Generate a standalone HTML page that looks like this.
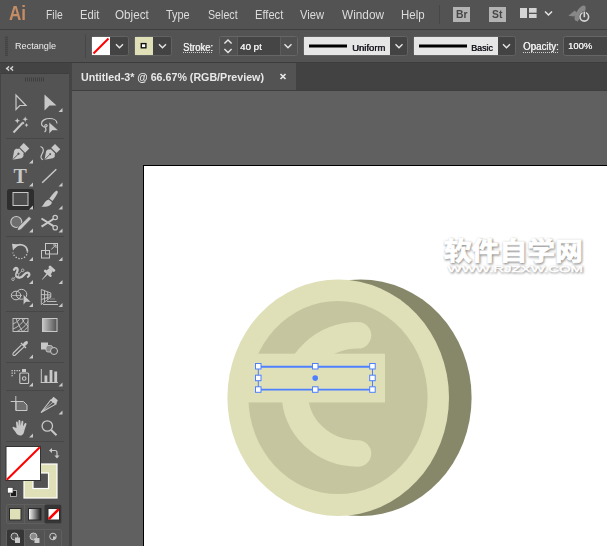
<!DOCTYPE html>
<html><head><meta charset="utf-8">
<style>
html,body{margin:0;padding:0;}
body{width:607px;height:546px;overflow:hidden;background:#606060;position:relative;font-family:"Liberation Sans","Noto Sans CJK SC",sans-serif;font-size:12px;color:#d8d8d8;}
.abs{position:absolute;}
#menubar{left:0;top:0;width:607px;height:29px;background:#535353;}
#menuline{left:0;top:29px;width:607px;height:1px;background:#3e3e3e;}
#ctrl{left:0;top:30px;width:607px;height:32px;background:#535353;}
#tabbar{left:0;top:62px;width:607px;height:28px;background:#424242;}
#tabline{left:72px;top:90px;width:535px;height:1px;background:#3e3e3e;}
#ctrlline{left:0;top:62px;width:607px;height:1px;background:#3c3c3c;}
#tab{left:72px;top:63px;width:224px;height:27px;background:#535353;}
#tools{left:0;top:62px;width:69px;height:484px;background:#535353;}
#toolhead{left:0;top:63px;width:69px;height:11px;background:#434343;border-bottom:1px solid #3e3e3e;box-sizing:border-box;}
#toolleft{left:0;top:63px;width:1px;height:483px;background:#454545;}
#gap{left:69px;top:62px;width:3px;height:484px;background:#444;}
.m{display:inline-block;transform-origin:0 0;position:absolute;top:7px;font-size:13px;color:#dcdcdc;white-space:nowrap;}
.c{display:inline-block;transform-origin:0 0;position:absolute;font-size:10px;color:#ededed;white-space:nowrap;}
#art{left:143px;top:165px;width:464px;height:381px;background:#fff;border-left:1px solid #000;border-top:1px solid #000;}
</style></head><body>
<div class="abs" id="menubar"></div>
<div class="abs" id="menuline"></div>
<div class="abs" id="ctrl"></div>
<div class="abs" id="tabbar"></div>
<div class="abs" id="tab"></div>
<div class="abs" id="tabline"></div>
<div class="abs" id="tools"></div>
<div class="abs" id="toolhead"></div>
<div class="abs" id="gap"></div>
<div class="abs" id="toolleft"></div>
<div class="abs" id="ctrlline"></div>
<div class="abs" id="art"></div>

<!-- tools -->
<svg class="abs" style="left:0;top:0" width="72" height="546">
  <defs>
    <linearGradient id="gr1" x1="0" x2="1" y1="0" y2="0"><stop offset="0" stop-color="#c8c8c8"/><stop offset="1" stop-color="#505050"/></linearGradient>
    <linearGradient id="gr2" x1="0" x2="1" y1="0" y2="0"><stop offset="0" stop-color="#ffffff"/><stop offset="1" stop-color="#1a1a1a"/></linearGradient>
  </defs>
  <!-- separators -->
  <g fill="#474747">
    <rect x="6" y="138" width="58" height="1"/><rect x="6" y="236" width="58" height="1"/><rect x="6" y="311" width="58" height="1"/><rect x="6" y="362" width="58" height="1"/><rect x="6" y="390" width="58" height="1"/><rect x="6" y="441" width="58" height="1"/>
  </g>
  <!-- selected tool bg -->
  <rect x="7" y="189" width="27" height="21" rx="2.500" fill="#2e2e2e"/>
  <!-- corner triangles -->
  <g fill="#c8c8c8">
    <path d="M62.500 108 v4 h-4z"/>
    <path d="M33 159.500 v4 h-4z"/>
    <path d="M33 182.500 v4 h-4z"/><path d="M62.500 182.500 v4 h-4z"/>
    <path d="M33 205.500 v4 h-4z"/><path d="M62.500 205.500 v4 h-4z"/>
    <path d="M33 228.500 v4 h-4z"/><path d="M62.500 228.500 v4 h-4z"/>
    <path d="M33 257 v4 h-4z"/><path d="M62.500 257 v4 h-4z"/>
    <path d="M33 280 v4 h-4z"/><path d="M62.500 280 v4 h-4z"/>
    <path d="M33 303 v4 h-4z"/><path d="M62.500 303 v4 h-4z"/>
    <path d="M33 354.500 v4 h-4z"/>
    <path d="M33 382.500 v4 h-4z"/><path d="M62.500 382.500 v4 h-4z"/>
    <path d="M62.500 410.500 v4 h-4z"/>
    <path d="M33 433.500 v4 h-4z"/>
  </g>
  <g fill="none" stroke="#c8c8c8" stroke-width="1.200" stroke-linejoin="miter">
    <!-- selection tool -->
    <path d="M16 95 L16 109.500 L19.800 105.500 L26 105.500 Z"/>
  </g>
  <!-- direct selection -->
  <path d="M44.500 94.500 L44.500 110.500 L49.500 105.500 L56.500 105.500 Z" fill="#c8c8c8"/>
  <!-- magic wand -->
  <path d="M13.500 132.500 L22.500 123" stroke="#c8c8c8" stroke-width="2" fill="none"/>
  <g fill="#c8c8c8">
    <path d="M17.300 118 l0.800 2 2 .8 -2 .8 -.8 2 -.8 -2 -2 -.8 2 -.8z"/>
    <path d="M25.200 116.500 l0.800 2 2 .8 -2 .8 -.8 2 -.8 -2 -2 -.8 2 -.8z"/>
    <path d="M26.500 123 l0.600 1.500 1.500 .6 -1.500 .6 -.6 1.500 -.6 -1.500 -1.500 -.6 1.500 -.6z"/>
    <path d="M23 121.500 l1.500 1.500 -1.200 1.200 -1.500 -1.500z"/>
  </g>
  <!-- lasso -->
  <path d="M57 123.500 C57 120 53 118.500 49.500 118.500 C45.500 118.500 41.500 120.500 41.500 123.500 C41.500 126 44 127.500 46 127 C47.500 126.500 47.500 124.500 46 124.500 C44.500 124.500 44.500 126.500 45.500 128 C46.500 129.500 46 131 44.500 132" fill="none" stroke="#c8c8c8" stroke-width="1.200"/>
  <path d="M49 122 L49 134 L52.300 130.500 L58.500 130.500 Z" fill="#c8c8c8" stroke="#535353" stroke-width="0.600"/>
  <!-- pen -->
  <g transform="translate(12.500 159.800) rotate(-45)">
    <path d="M0 0 L7.500 -5.200 C9.500 -6 11 -5.200 11.500 -3.800 L12.800 -3.200 L12.800 3.200 L11.500 3.800 C11 5.200 9.500 6 7.500 5.200 Z" fill="#c8c8c8"/>
    <path d="M0 0 L8 0" stroke="#535353" stroke-width="0.900"/><circle cx="8.500" cy="0" r="1.100" fill="#535353"/>
    <rect x="14" y="-3.900" width="5.800" height="7.800" fill="#c8c8c8"/>
  </g>
  <!-- curvature -->
  <g transform="translate(44.500 159.800) rotate(-45)">
    <path d="M0 0 L7 -4.800 C9 -5.600 10.300 -4.800 10.800 -3.600 L12 -3 L12 3 L10.800 3.600 C10.300 4.800 9 5.600 7 4.800 Z" fill="#c8c8c8"/>
    <path d="M0 0 L7.500 0" stroke="#535353" stroke-width="0.900"/><circle cx="8" cy="0" r="1" fill="#535353"/>
    <rect x="13.200" y="-3.700" width="5.400" height="7.400" fill="#c8c8c8"/>
  </g>
  <path d="M40.500 146.500 C44 147.500 44 151 42 154 C40.500 156.500 40.500 159 43 159.800" fill="none" stroke="#c8c8c8" stroke-width="1.200"/>
  <!-- line -->
  <path d="M42.200 182.700 L56.300 169.300" stroke="#c8c8c8" stroke-width="1.500" fill="none"/>
  <!-- rectangle -->
  <rect x="13" y="192.500" width="15" height="13" fill="#4c4c4c" stroke="#c8c8c8" stroke-width="1"/>
  <!-- brush -->
  <path d="M57.300 191 C58.500 192 57.800 193.500 52.500 201 L49.300 198.600 C54.800 191.300 56.100 190.200 57.300 191 Z" fill="#c8c8c8"/>
  <path d="M48.600 199.500 L51.800 202 C52 205.500 47 207.500 41.300 206.600 C44.500 205 44 201 48.600 199.500 Z" fill="#c8c8c8"/>
  <!-- shaper -->
  <circle cx="16.300" cy="222" r="5.500" fill="#6e6e6e" stroke="#c8c8c8" stroke-width="1.200"/>
  <path d="M29 216.300 L31.500 218.800 L20.800 229.800 L17 230.800 L18 227.200 Z" fill="#c8c8c8" stroke="#535353" stroke-width="0.900"/>
  <!-- scissors -->
  <g fill="none" stroke="#c8c8c8">
    <circle cx="55.200" cy="217.500" r="2.200" stroke-width="1.200"/>
    <circle cx="55.200" cy="227.700" r="2.200" stroke-width="1.200"/>
    <path d="M41.500 218.500 L53.500 226.200 M41.500 226.700 L53.500 219" stroke-width="2"/>
  </g>
  <!-- rotate -->
  <path d="M14.500 247.500 A7.300 7.300 0 0 1 27.500 251.500" fill="none" stroke="#c8c8c8" stroke-width="1.700"/>
  <path d="M27.500 251.500 A7.300 7.300 0 0 1 13 252.500" fill="none" stroke="#c8c8c8" stroke-width="1.300" stroke-dasharray="1.300 1.600"/>
  <path d="M12 243.800 L18 244.600 L13 250.500 Z" fill="#c8c8c8"/>
  <!-- scale -->
  <g fill="none" stroke="#c8c8c8" stroke-width="1">
    <rect x="45.500" y="243.500" width="12" height="10.500"/>
    <rect x="41.500" y="250.500" width="8" height="7.500"/>
    <path d="M51.300 249.300 L55.800 245.200 M53 245 L56 245 L56 248"/>
  </g>
  <!-- width tool -->
  <path d="M14 269.800 C15.200 266.800 18.800 268 17.300 271.300 C15.800 274.500 15.500 277.300 19.300 277.600 C23.300 277.900 24 272.600 27.200 272.600 C29.800 272.600 30 275.800 28 276.700" fill="none" stroke="#c8c8c8" stroke-width="2.300" stroke-linecap="round"/>
  <path d="M16.500 274 C17.500 279.500 22 278.500 24.500 275.500 L19.500 278.600 Z" fill="#c8c8c8"/>
  <path d="M13.300 278.800 L22.600 270.500" stroke="#c8c8c8" stroke-width="0.700"/>
  <circle cx="17.500" cy="274.800" r="1.400" fill="#535353" stroke="#c8c8c8" stroke-width="0.800"/>
  <circle cx="22.700" cy="270.300" r="1.300" fill="#535353" stroke="#c8c8c8" stroke-width="0.800"/>
  <circle cx="13" cy="279.200" r="1.300" fill="#535353" stroke="#c8c8c8" stroke-width="0.800"/>
  <!-- pin -->
  <g transform="translate(47.800 273.300) rotate(42)" fill="#c8c8c8">
    <rect x="-3.800" y="-7.600" width="7.600" height="2.800" rx="0.800"/>
    <path d="M-2.200 -5 L2.200 -5 L3 -0.800 L-3 -0.800 Z"/>
    <rect x="-4.800" y="-1.200" width="9.600" height="2.400" rx="1"/>
    <path d="M-0.800 1 L0.800 1 L0.300 8.500 L-0.300 8.500 Z"/>
  </g>
  <!-- shape builder -->
  <g fill="none" stroke="#c8c8c8" stroke-width="1">
    <ellipse cx="16" cy="295.500" rx="4.700" ry="4.300"/>
    <ellipse cx="21.500" cy="294.300" rx="5.300" ry="5"/>
    <path d="M12 295.500 L22 295.500" stroke-width="0.700"/>
  </g>
  <path d="M23.300 294.500 L23.300 305 L26 302 L31 302 Z" fill="#c8c8c8" stroke="#535353" stroke-width="0.500"/>
  <!-- perspective grid -->
  <g fill="none" stroke="#c8c8c8" stroke-width="0.900">
    <path d="M41.300 289.500 L41.300 304.500 L50.800 297.300 L50.800 293 Z"/>
    <path d="M44.500 290.500 L44.500 302 M47.700 291.800 L47.700 299.600 M41.300 294.500 L50.800 295 M41.300 299.500 L50.800 296.500"/>
    <path d="M43 304.500 L58 304.500 M47 301.500 L56.500 301.500" />
    <path d="M50 299 L55 299" stroke="#8c8c8c"/>
  </g>
  <!-- mesh -->
  <g fill="none" stroke="#c8c8c8" stroke-width="0.900">
    <rect x="13" y="318.500" width="15" height="13"/>
    <path d="M13 324 C17 322 19 320.500 20 318.500 M13 329 C19 326.500 23 322.500 24.500 318.500 M17 331.500 C22 329 26.500 325 28 321.500 M23 331.500 C25 330 27 328 28 326.500 M16 318.500 C17.500 322 20 328 22.500 331.500 M22 318.500 C23 321.500 25.500 324.500 28 326"/>
  </g>
  <!-- gradient -->
  <rect x="42.500" y="318.500" width="14.500" height="13" fill="url(#gr1)" stroke="#c8c8c8" stroke-width="1"/>
  <!-- eyedropper -->
  <g>
    <path d="M21.500 344.800 L13.300 353 C12 354.500 13.800 356.300 15.300 355 L24 346.800" fill="none" stroke="#c8c8c8" stroke-width="1.100"/>
    <path d="M20.500 343.500 L25.500 348.500 L26.500 347.500 L25 346 C28 344 28.500 342.500 27.500 341.500 C26.500 340.500 25 341 23 344 L21.500 342.500 Z" fill="#c8c8c8"/>
  </g>
  <!-- blend -->
  <rect x="41" y="342.500" width="7" height="7" fill="#c8c8c8"/>
  <rect x="46" y="345.500" width="6.500" height="6.500" rx="2" fill="#8a8a8a" stroke="#c8c8c8" stroke-width="0.900"/>
  <circle cx="54" cy="351" r="3.500" fill="#535353" stroke="#c8c8c8" stroke-width="1"/>
  <!-- symbol sprayer -->
  <g fill="#c8c8c8">
    <rect x="11.500" y="370" width="1.300" height="1.300"/><rect x="14" y="370" width="1.300" height="1.300"/><rect x="16.500" y="370" width="1.300" height="1.300"/><rect x="18.800" y="370" width="1.300" height="1.300"/>
    <rect x="11.500" y="372.500" width="1.300" height="1.300"/><rect x="14" y="372.500" width="1.300" height="1.300"/>
    <rect x="11.500" y="375" width="1.300" height="1.300"/>
    <rect x="22" y="369" width="4" height="3"/>
  </g>
  <rect x="19.800" y="373" width="8.800" height="10.500" rx="1" fill="none" stroke="#c8c8c8" stroke-width="1.100"/>
  <circle cx="24.200" cy="378.500" r="1.800" fill="none" stroke="#c8c8c8" stroke-width="1.100"/>
  <!-- graph -->
  <g fill="#c8c8c8">
    <rect x="40.800" y="369" width="1" height="14"/><rect x="40.800" y="382" width="17" height="1"/>
    <rect x="44.500" y="375.500" width="2.800" height="6.500"/><rect x="49.600" y="370" width="2.800" height="12"/><rect x="54.300" y="371.500" width="2.800" height="10.500"/>
  </g>
  <!-- artboard -->
  <path d="M16 401.500 L23.500 401.500 L27 405 L27 410.500 L16 410.500 Z" fill="#6e6e6e" stroke="#c8c8c8" stroke-width="1"/>
  <path d="M15.800 396 L15.800 410.500 M10.700 401.500 L16 401.500" stroke="#c8c8c8" stroke-width="1" fill="none"/>
  <!-- slice -->
  <path d="M41 412.500 L50.800 400 L56 404 Z" fill="none" stroke="#c8c8c8" stroke-width="1.100"/>
  <path d="M50.500 400.300 L53.500 396.800 L57.800 400.300 L56 404.200 Z" fill="#c8c8c8"/>
  <path d="M41 412.500 L53.500 401.700" stroke="#c8c8c8" stroke-width="0.800"/>
  <!-- hand -->
  <path d="M16.500 428 L16 422.500 C16 421.200 17.700 421.200 17.800 422.500 L18.300 426 L18.500 421 C18.500 419.600 20.300 419.600 20.400 421 L20.700 426 L21.500 421.500 C21.700 420.200 23.400 420.400 23.300 421.800 L23 426.500 L24.700 423.500 C25.400 422.400 26.900 423.200 26.400 424.400 L24.500 430 C24 433 23 435.500 20.500 435.500 C18 435.500 16.500 434 15.500 432 L12.800 428.500 C12 427.300 13.300 426.300 14.300 427.200 Z" fill="#c8c8c8"/>
  <!-- zoom -->
  <circle cx="47.300" cy="426" r="5.200" fill="none" stroke="#c8c8c8" stroke-width="1.300"/>
  <path d="M51.200 430 L56.500 435.300" stroke="#c8c8c8" stroke-width="2" fill="none"/>
  <!-- fill / stroke -->
  <rect x="24" y="464" width="33" height="34" fill="#dfe0b8" stroke="#ffffff" stroke-width="1.200"/>
  <rect x="33" y="473" width="15.500" height="15.500" fill="#535353" stroke="#ffffff" stroke-width="1.200"/>
  <rect x="6" y="446.500" width="34.500" height="34" fill="#fff" stroke="#333" stroke-width="1"/>
  <path d="M6.800 479.800 L39.800 447.200" stroke="#f00" stroke-width="2"/>
  <!-- swap -->
  <path d="M51.500 450.500 L55 450.500 C56.500 450.500 57 451 57 452.500 L57 456" fill="none" stroke="#c8c8c8" stroke-width="1.200"/>
  <path d="M49 450.500 L52 448 L52 453 Z M57 458.500 L54.500 455.500 L59.500 455.500 Z" fill="#c8c8c8"/>
  <!-- default -->
  <rect x="10.500" y="490.500" width="6" height="6" fill="#1c1c1c" stroke="#c8c8c8" stroke-width="0.800"/>
  <rect x="7.500" y="487.500" width="5.500" height="5.500" fill="#fff" stroke="#333" stroke-width="0.600"/>
  <!-- color mode buttons -->
  <rect x="6.500" y="504.500" width="55" height="19" rx="1.500" fill="#535353" stroke="#5f5f5f" stroke-width="1"/>
  <rect x="44.500" y="504.500" width="17" height="19" rx="1.500" fill="#363636"/>
  <rect x="24" y="505" width="1" height="18" fill="#5f5f5f"/>
  <rect x="9.500" y="508.500" width="11.500" height="11.500" fill="#dfe0b8" stroke="#2a2a2a" stroke-width="1"/>
  <rect x="28.500" y="508.500" width="12.500" height="11.500" fill="url(#gr2)" stroke="#2a2a2a" stroke-width="1"/>
  <rect x="48" y="508.500" width="11.500" height="11.500" fill="#fff" stroke="#2a2a2a" stroke-width="1"/>
  <path d="M48.800 519.200 L58.800 509.200" stroke="#f00" stroke-width="2.600"/>
  <!-- draw mode buttons -->
  <rect x="6.500" y="529.500" width="55" height="20" rx="1.500" fill="#535353" stroke="#5f5f5f" stroke-width="1"/>
  <rect x="7" y="529.500" width="17" height="17" rx="1.500" fill="#363636"/>
  <rect x="24" y="530" width="1" height="16" fill="#5f5f5f"/><rect x="44" y="530" width="1" height="16" fill="#5f5f5f"/>
  <circle cx="14.500" cy="536.500" r="3.500" fill="#535353" stroke="#c8c8c8" stroke-width="1"/>
  <rect x="15" y="537.500" width="5" height="5.500" fill="#c8c8c8"/>
  <circle cx="33.500" cy="536.500" r="3.500" fill="#8a8a8a" stroke="#c8c8c8" stroke-width="1"/>
  <rect x="34.500" y="538" width="5" height="5" fill="#c8c8c8"/>
  <circle cx="53" cy="536.500" r="3.300" fill="none" stroke="#c8c8c8" stroke-width="1"/>
  <path d="M53 536.500 L56 536.500 A3 3 0 0 1 53 539.500 Z" fill="#c8c8c8"/>
</svg>
<span class="abs" style="left:13.500px;top:163.800px;font-family:'Liberation Serif',serif;font-weight:bold;font-size:20px;line-height:24px;color:#c8c8c8;">T</span>

<!-- menu -->
<div class="abs" style="left:8.500px;top:1px;font-size:20px;line-height:24px;color:#c58d64;font-weight:bold;transform:scaleX(0.85);transform-origin:0 0;">Ai</div>
<span class="m" style="left:46.0px;transform:scaleX(0.797)">File</span>
<span class="m" style="left:79.7px;transform:scaleX(0.861)">Edit</span>
<span class="m" style="left:115.3px;transform:scaleX(0.897)">Object</span>
<span class="m" style="left:166.3px;transform:scaleX(0.841)">Type</span>
<span class="m" style="left:207.6px;transform:scaleX(0.819)">Select</span>
<span class="m" style="left:255.3px;transform:scaleX(0.857)">Effect</span>
<span class="m" style="left:300.0px;transform:scaleX(0.859)">View</span>
<span class="m" style="left:342.0px;transform:scaleX(0.908)">Window</span>
<span class="m" style="left:401.0px;transform:scaleX(0.882)">Help</span>


<!-- control bar -->
<svg class="abs" style="left:0;top:0" width="607" height="91">
  <g fill="#3f3f3f">
    <rect x="5" y="36.7" width="3" height="1"/><rect x="5" y="38.7" width="3" height="1"/><rect x="5" y="40.7" width="3" height="1"/><rect x="5" y="42.7" width="3" height="1"/><rect x="5" y="44.7" width="3" height="1"/><rect x="5" y="46.7" width="3" height="1"/><rect x="5" y="48.7" width="3" height="1"/><rect x="5" y="50.7" width="3" height="1"/><rect x="5" y="52.7" width="3" height="1"/><rect x="5" y="54.7" width="3" height="1"/>
  </g>
  <rect x="85" y="34" width="1" height="24" fill="#474747"/>
  <!-- fill swatch -->
  <rect x="91.5" y="36.5" width="37" height="19" rx="2" fill="#434343" stroke="#626262"/>
  <rect x="92" y="37" width="18" height="18" fill="#fff"/>
  <line x1="93.5" y1="53.5" x2="108.5" y2="38.5" stroke="#f00" stroke-width="2"/>
  <path d="M116.0 44.3 L119.5 47.8 L123.0 44.3" fill="none" stroke="#e6e6e6" stroke-width="1.4"/>
  <!-- stroke swatch -->
  <rect x="134.5" y="36.5" width="37" height="19" rx="2" fill="#434343" stroke="#626262"/>
  <rect x="135" y="37" width="18" height="18" fill="#dfe0b8"/>
  <rect x="141.3" y="43.6" width="4.6" height="4.2" fill="#fff" stroke="#111" stroke-width="1.4"/>
  <path d="M159.0 44.3 L162.5 47.8 L166.0 44.3" fill="none" stroke="#e6e6e6" stroke-width="1.4"/>
  <!-- stroke weight -->
  <rect x="219.5" y="36.5" width="78" height="19" rx="2" fill="#454545" stroke="#666"/>
  <rect x="220" y="37" width="17" height="18" fill="#505050"/>
  <rect x="237" y="37" width="1" height="18" fill="#5c5c5c"/>
  <rect x="280" y="37" width="1" height="18" fill="#5c5c5c"/>
  <rect x="281" y="37" width="16" height="18" fill="#505050"/>
  <path d="M224.4 43.6 L228 40 L231.6 43.6 M224.4 49 L228 52.6 L231.6 49" fill="none" stroke="#e6e6e6" stroke-width="1.4"/>
  <path d="M284.5 44.3 L288.0 47.8 L291.5 44.3" fill="none" stroke="#e6e6e6" stroke-width="1.4"/>
  <line x1="183" y1="52.5" x2="213" y2="52.5" stroke="#d0d0d0" stroke-width="1" stroke-dasharray="1 1"/>
  <!-- uniform -->
  <rect x="303.5" y="36.5" width="104" height="19" rx="2" fill="#434343" stroke="#626262"/>
  <rect x="304" y="37" width="86" height="18" fill="#e6e6e6"/>
  <rect x="309" y="44.5" width="38" height="3" fill="#000"/>
  <path d="M395.5 44.3 L399.0 47.8 L402.5 44.3" fill="none" stroke="#e6e6e6" stroke-width="1.4"/>
  <!-- basic -->
  <rect x="413.5" y="36.5" width="102" height="19" rx="2" fill="#434343" stroke="#626262"/>
  <rect x="414" y="37" width="84" height="18" fill="#e6e6e6"/>
  <rect x="419" y="44.5" width="48" height="3" fill="#000"/>
  <path d="M503.0 44.3 L506.5 47.8 L510.0 44.3" fill="none" stroke="#e6e6e6" stroke-width="1.4"/>
  <!-- opacity -->
  <line x1="523" y1="52.500" x2="559" y2="52.500" stroke="#d0d0d0" stroke-width="1" stroke-dasharray="1 1"/>
  <rect x="563.500" y="36.500" width="50" height="19" rx="2" fill="#454545" stroke="#666"/>
  <!-- menubar right -->
  <rect x="439" y="5" width="1" height="19" fill="#474747"/>
  <rect x="453" y="7" width="17" height="15" fill="#b3b3b3"/>
  <rect x="489" y="7" width="17" height="15" fill="#b3b3b3"/>
  <g fill="#d4d4d4"><rect x="520" y="8" width="7" height="10"/><rect x="529" y="8" width="7.6" height="4.7"/><rect x="529" y="14" width="7.6" height="4"/></g>
  <path d="M545 11.500 L548.500 15 L552 11.500" fill="none" stroke="#e6e6e6" stroke-width="1.5"/>
  <!-- rocket/power -->
  <g fill="#878787">
    <ellipse cx="580.1" cy="13.2" rx="8.8" ry="3.7" transform="rotate(-58 580.1 13.2)"/>
    <path d="M568.3 15.8 L574.8 10.6 L577.5 13.5 L574 16.5 Z"/>
    <path d="M575.8 16.5 L580 17.5 L577.3 22 Z"/>
  </g>
  <circle cx="584.3" cy="16.8" r="5.5" fill="#535353"/>
  <circle cx="584.3" cy="16.8" r="4.3" fill="none" stroke="#d4d4d4" stroke-width="1.6"/>
  <rect x="582.6" y="11.2" width="3.4" height="6.2" fill="#535353"/>
  <rect x="583.5" y="11.6" width="1.6" height="5.6" fill="#d4d4d4"/>
  <!-- tab close -->
  <path d="M280.5 74 L285.5 79 M285.5 74 L280.5 79" stroke="#e6e6e6" stroke-width="1.7"/>
  <!-- toolhead -->
  <path d="M9 66 L5.8 68.5 L9 71 L9 69.7 L7.6 68.5 L9 67.3 Z M13 66 L9.8 68.5 L13 71 L13 69.7 L11.6 68.5 L13 67.3 Z" fill="#dcdcdc" stroke="#dcdcdc" stroke-width="0.4"/>
  <g fill="#3f3f3f"><rect x="25" y="77.4" width="1" height="4"/><rect x="27" y="77.4" width="1" height="4"/><rect x="29" y="77.4" width="1" height="4"/><rect x="31" y="77.4" width="1" height="4"/><rect x="33" y="77.4" width="1" height="4"/><rect x="35" y="77.4" width="1" height="4"/><rect x="37" y="77.4" width="1" height="4"/><rect x="39" y="77.4" width="1" height="4"/><rect x="41" y="77.4" width="1" height="4"/><rect x="43" y="77.4" width="1" height="4"/></g>
</svg>
<span class="c" style="left:15.0px;top:40px;transform:scaleX(0.958);font-size:9.5px">Rectangle</span>
<span class="c" style="left:183.0px;top:41.5px;transform:scaleX(0.947);text-shadow:0.35px 0 0 #ededed">Stroke:</span>
<span class="c" style="left:240.0px;top:41.5px;transform:scaleX(1.083);font-size:9px;text-shadow:0.3px 0 0 #ededed">40 pt</span>
<span class="c" style="left:351.8px;top:41.5px;color:#101018;text-shadow:0.4px 0 0 #101018;transform:scaleX(0.998);font-size:9.5px">Uniform</span>
<span class="c" style="left:471.0px;top:41.5px;color:#101018;text-shadow:0.4px 0 0 #101018;transform:scaleX(0.938);font-size:9.5px">Basic</span>
<span class="c" style="left:522.7px;top:41px;transform:scaleX(0.973);text-shadow:0.35px 0 0 #ededed">Opacity:</span>
<span class="c" style="left:567.6px;top:41px;transform:scaleX(1.051);font-size:9px;text-shadow:0.3px 0 0 #ededed">100%</span>
<span class="abs" style="left:456px;top:8px;font-size:11.500px;color:#474747;font-weight:bold;transform:scaleX(0.9);transform-origin:0 0;display:inline-block">Br</span>
<span class="abs" style="left:492px;top:8px;font-size:11.500px;color:#474747;font-weight:bold;transform:scaleX(0.9);transform-origin:0 0;display:inline-block">St</span>
<span class="abs" id="tabtxt" style="display:inline-block;transform-origin:0 0;left:81.0px;top:71px;font-size:11px;font-weight:bold;color:#e8e8e8;white-space:nowrap;transform:scaleX(0.970)">Untitled-3* @ 66.67% (RGB/Preview)</span>

<svg class="abs" style="left:0;top:0" width="607" height="546">
  <defs>
    <filter id="wsh" x="-10%" y="-30%" width="120%" height="180%"><feGaussianBlur stdDeviation="0.9"/></filter>
  </defs>
  <!-- coin -->
  <ellipse cx="360.600" cy="397.700" rx="111" ry="118.300" fill="#87886a"/>
  <ellipse cx="338.200" cy="397.700" rx="110.800" ry="118.300" fill="#dfe0b8"/>
  <ellipse cx="338" cy="397.500" rx="89.600" ry="96.500" fill="#c5c69f"/>
  <rect x="240" y="353.700" width="145" height="48.700" fill="#dfe0b8"/>
  <path d="M358 335.300 A63 59.100 0 0 0 295 394.400 A63 59.100 0 0 0 358 453.500" fill="none" stroke="#dfe0b8" stroke-width="26.500" stroke-linecap="round"/>
  <!-- selection box -->
  <g fill="none" stroke="#4d7fff">
    <path d="M258.300 366.700 L372.500 366.700 M258.300 389.600 L372.500 389.600" stroke-width="1.900"/>
    <path d="M258.300 366.700 L258.300 389.600 M372.500 366.700 L372.500 389.600" stroke-width="1"/>
  </g>
  <circle cx="315.200" cy="378.100" r="2.800" fill="#4d7fff"/>
  <g fill="#fff" stroke="#4d7fff" stroke-width="1">
    <rect x="255.500" y="363.500" width="5.500" height="5.500"/><rect x="312.500" y="363.500" width="5.500" height="5.500"/><rect x="369.700" y="363.500" width="5.500" height="5.500"/>
    <rect x="255.500" y="375.200" width="5.500" height="5.500"/><rect x="369.700" y="375.200" width="5.500" height="5.500"/>
    <rect x="255.500" y="386.800" width="5.500" height="5.500"/><rect x="312.500" y="386.800" width="5.500" height="5.500"/><rect x="369.700" y="386.800" width="5.500" height="5.500"/>
  </g>
  <!-- watermark -->
  <g font-family="'Liberation Sans','Noto Sans CJK SC',sans-serif" font-weight="bold">
    <g fill="#8e8e8e" stroke="#8e8e8e" stroke-width="1.3" filter="url(#wsh)">
      <text x="444.6" y="261" font-size="24.5" textLength="139" lengthAdjust="spacingAndGlyphs">软件自学网</text>
      <text x="448.4" y="272.6" font-size="8.5" font-weight="normal" stroke-width="0.5" textLength="135.5" lengthAdjust="spacingAndGlyphs">WWW.RJZXW.COM</text>
    </g>
    <g fill="#fff" stroke="#fff" stroke-width="0.9">
      <text x="443.8" y="260" font-size="24.5" textLength="139" lengthAdjust="spacingAndGlyphs">软件自学网</text>
      <text x="447.6" y="271.8" font-size="8.5" font-weight="normal" stroke-width="0.4" textLength="135.5" lengthAdjust="spacingAndGlyphs">WWW.RJZXW.COM</text>
    </g>
  </g>
</svg>
</body></html>
